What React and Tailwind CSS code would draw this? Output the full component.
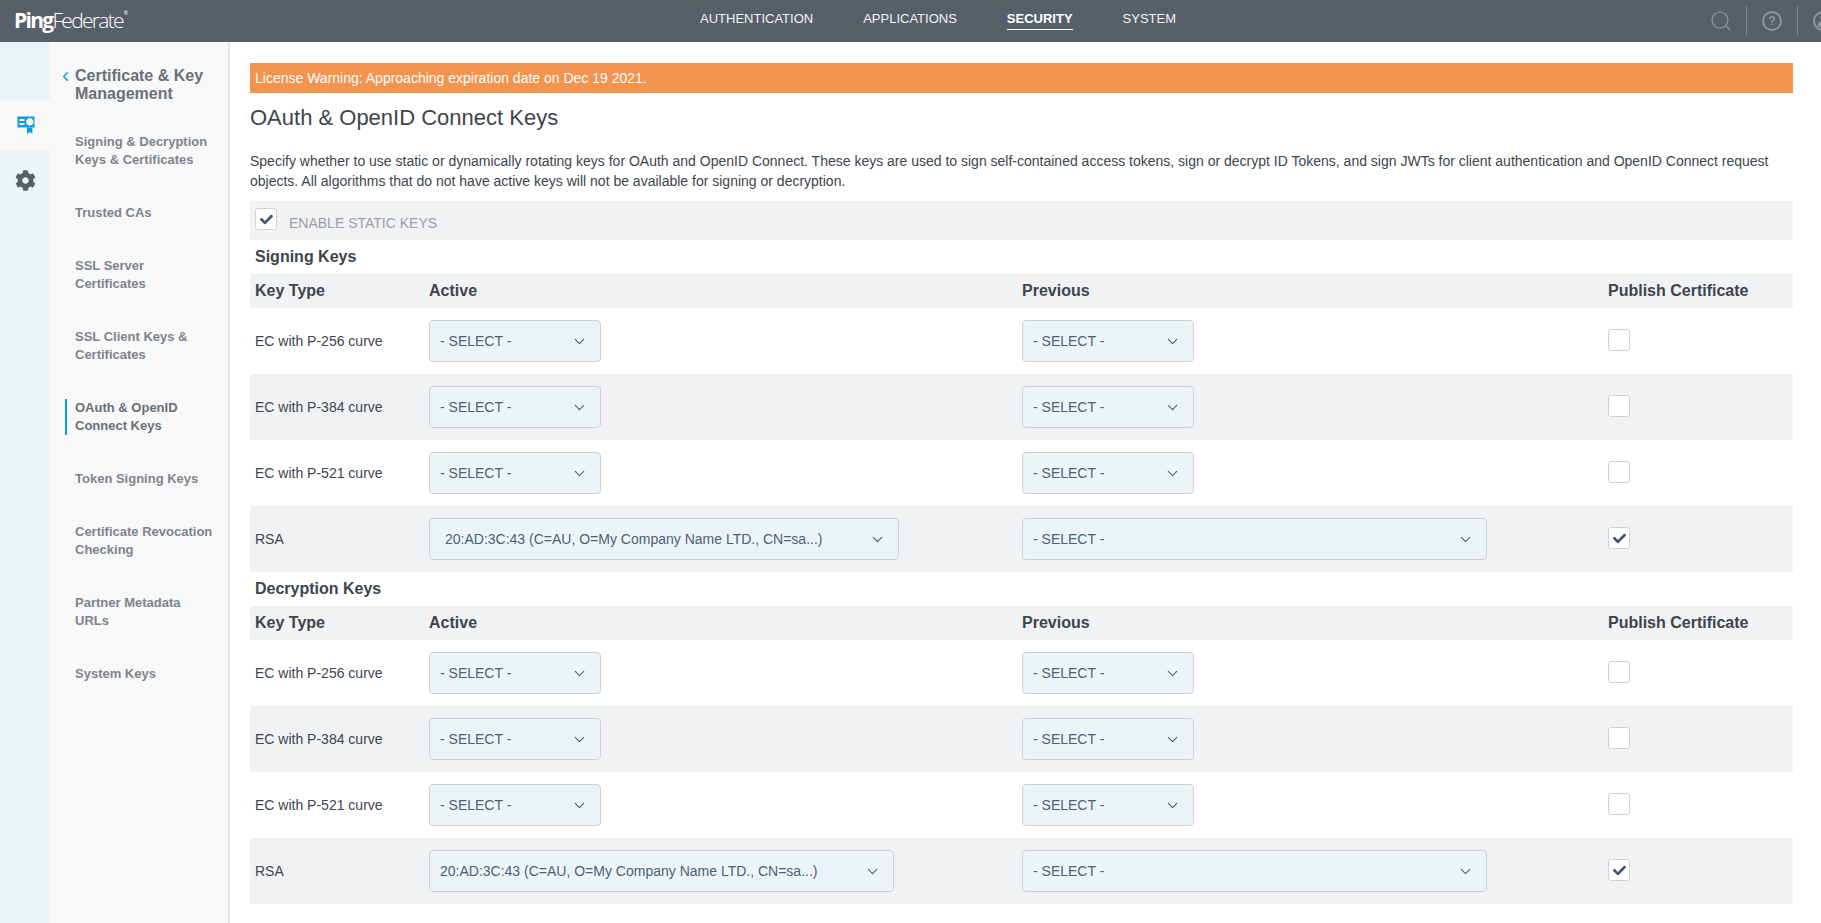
import React from "react";
import { ChevronDown, ChevronLeft, Search } from "lucide-react";
import { FaCheck, FaCog, FaUser } from "react-icons/fa";

const navLinks = ["AUTHENTICATION", "APPLICATIONS", "SECURITY", "SYSTEM"];

const sideItems = [
  ["Signing & Decryption", "Keys & Certificates"],
  ["Trusted CAs"],
  ["SSL Server", "Certificates"],
  ["SSL Client Keys &", "Certificates"],
  ["OAuth & OpenID", "Connect Keys"],
  ["Token Signing Keys"],
  ["Certificate Revocation", "Checking"],
  ["Partner Metadata", "URLs"],
  ["System Keys"],
];

const CertIcon = () => (
  <svg width="18" height="20" viewBox="0 0 18 20" fill="none">
    <path d="M0.5 1.5h17v11h-17z" fill="#0a9fd8" />
    <path d="M2.5 4h5v2h-5zM2.5 8h5v2h-5z" fill="#f8f8f8" />
    <path
      d="M12.8 2.8l1 1 1.4-.3.3 1.4 1.2.8-.6 1.2.6 1.3-1.2.7-.3 1.4-1.4-.3-1 1-1-1-1.4.3-.3-1.4-1.2-.7.6-1.3-.6-1.2 1.2-.8.3-1.4 1.4.3z"
      fill="#f8f8f8"
    />
    <path d="M10 12.5h5.4v6.5l-2.7-1.9-2.7 1.9z" fill="#0a9fd8" />
  </svg>
);

const Checkbox = ({ checked }) => (
  <div className="flex h-[22px] w-[22px] items-center justify-center rounded-[3px] border border-[#cfd2d6] bg-white text-[#3f5573]">
    {checked && <FaCheck size={13} />}
  </div>
);

const Select = ({ label = "- SELECT -", width = "w-[172px]", pad = "pl-[10px]" }) => (
  <div
    className={`flex h-[42px] items-center justify-between rounded-[4px] border border-[#cdd2d6] bg-[#edf4f7] pr-[12px] text-[14px] text-[#4a5f78] ${width} ${pad}`}
  >
    <span>{label}</span>
    <ChevronDown size={17} strokeWidth={1.6} />
  </div>
);

const KeyRow = ({ name, shaded, active, previous, checked }) => (
  <div className={`grid h-[66px] grid-cols-[174px_593px_586px_1fr] items-center pl-[5px] ${shaded ? "bg-[#f1f2f4]" : "bg-white"}`}>
    <div className="text-[14px] text-[#3d454d]">{name}</div>
    <div>{active}</div>
    <div>{previous}</div>
    <div className="-mt-[2px]">
      <Checkbox checked={checked} />
    </div>
  </div>
);

const KeySection = ({ title, activeSelect }) => (
  <div>
    <div className="flex h-[34px] items-center pl-[5px] text-[16px] font-bold text-[#3d454d]">{title}</div>
    <div className="grid h-[34px] grid-cols-[174px_593px_586px_1fr] items-center bg-[#f1f2f4] pl-[5px] text-[16px] font-bold text-[#3d454d]">
      <div>Key Type</div>
      <div>Active</div>
      <div>Previous</div>
      <div>Publish Certificate</div>
    </div>
    <KeyRow name="EC with P-256 curve" active={<Select />} previous={<Select />} />
    <KeyRow name="EC with P-384 curve" shaded active={<Select />} previous={<Select />} />
    <KeyRow name="EC with P-521 curve" active={<Select />} previous={<Select />} />
    <KeyRow
      name="RSA"
      shaded
      checked
      active={activeSelect}
      previous={<Select width="w-[465px]" />}
    />
  </div>
);

export default function App() {
  return (
    <div className="flex h-[923px] w-[1821px] flex-col overflow-hidden bg-white font-['Liberation_Sans',sans-serif]">
      {/* Header */}
      <header className="relative flex h-[42px] shrink-0 items-center bg-[#576068] text-white">
        <div className="ml-[14px] -mt-[2px] flex items-start font-['Open_Sans',sans-serif] text-[21px] leading-[30px] tracking-[-1.7px]">
          <span className="font-bold">Ping</span>
          <span className="font-light">Federate</span>
          <span className="ml-[1px] mt-[5px] text-[5px] leading-[6px] tracking-normal">®</span>
        </div>
        <nav className="absolute left-[700px] top-[9px] flex gap-[50px] text-[13px] text-[#f1f2f3]">
          {navLinks.map((link) => (
            <span
              key={link}
              className={link === "SECURITY" ? "border-b border-white font-bold text-white" : "border-b border-transparent"}
            >
              {link}
            </span>
          ))}
        </nav>
        <div className="absolute left-[1709px] -mt-[1px] flex items-center text-[#8f979d]">
          <Search size={24} strokeWidth={1.2} className="mr-[13px]" />
          <div className="h-[30px] w-px bg-[#7b8389]" />
          <div className="mx-[15px] flex h-[20px] w-[20px] items-center justify-center rounded-full border-2 border-[#8f979d] text-[12px] font-bold">
            ?
          </div>
          <div className="h-[30px] w-px bg-[#7b8389]" />
          <div className="ml-[15px] flex h-[20px] w-[20px] shrink-0 items-center justify-center overflow-hidden rounded-full border-2 border-[#8f979d]">
            <FaUser size={13} />
          </div>
        </div>
      </header>

      <div className="flex min-h-0 flex-1">
        {/* Icon rail */}
        <aside className="w-[50px] shrink-0 bg-[#edf4f7] pt-[58px]">
          <div className="flex h-[50px] items-center justify-center bg-[#f8f8f8] pl-[1px]">
            <CertIcon />
          </div>
          <div className="flex h-[50px] items-center justify-center pt-[10px] text-[#576068]">
            <FaCog size={21} />
          </div>
        </aside>

        {/* Section nav */}
        <aside className="w-[180px] shrink-0 border-r-2 border-[#e4e7ea] bg-[#f8f8f8] pt-[25px]">
          <div className="relative pl-[25px] text-[16px] font-bold leading-[18px] text-[#68707a]">
            <ChevronLeft size={15} strokeWidth={2.5} className="absolute left-[8px] top-[2px] text-[#0a9fd8]" />
            Certificate &amp; Key
            <br />
            Management
          </div>
          <div className="mt-[30px] flex flex-col gap-[35px] text-[13px] font-bold leading-[18px] text-[#7d848c]">
            {sideItems.map((lines) => {
              const active = lines[0] === "OAuth & OpenID";
              return (
                <div
                  key={lines[0]}
                  className={`ml-[15px] border-l-2 pl-[8px] ${active ? "border-[#0a9fd8] text-[#68707a]" : "border-transparent"}`}
                >
                  {lines.map((line) => (
                    <div key={line}>{line}</div>
                  ))}
                </div>
              );
            })}
          </div>
        </aside>

        {/* Content */}
        <main className="min-w-0 flex-1 pl-[20px] pr-[28px] pt-[21px]">
          <div className="flex h-[30px] items-center bg-[#f2934f] pl-[5px] text-[14px] text-white">
            License Warning: Approaching expiration date on Dec 19 2021.
          </div>
          <h1 className="mt-[10px] text-[22px] leading-[30px] text-[#3d454d]">OAuth &amp; OpenID Connect Keys</h1>
          <p className="mt-[18px] text-[14px] leading-[20px] text-[#3d454d]">
            Specify whether to use static or dynamically rotating keys for OAuth and OpenID Connect. These keys are used to sign self-contained access tokens, sign or decrypt ID Tokens, and sign JWTs for client authentication and OpenID Connect request objects. All algorithms that do not have active keys will not be available for signing or decryption.
          </p>
          <div className="mt-[10px] flex h-[39px] bg-[#f1f2f4] pl-[5px]">
            <div className="mt-[7px]">
              <Checkbox checked />
            </div>
            <span className="ml-[12px] mt-[14px] text-[14px] leading-[16px] text-[#9a9fa5]">ENABLE STATIC KEYS</span>
          </div>
          <KeySection
            title="Signing Keys"
            activeSelect={
              <Select
                width="w-[470px]"
                pad="pl-[15px]"
                label="20:AD:3C:43 (C=AU, O=My Company Name LTD., CN=sa...)"
              />
            }
          />
          <KeySection
            title="Decryption Keys"
            activeSelect={
              <Select
                width="w-[465px]"
                pad="pl-[10px]"
                label="20:AD:3C:43 (C=AU, O=My Company Name LTD., CN=sa...)"
              />
            }
          />
        </main>
      </div>
    </div>
  );
}
